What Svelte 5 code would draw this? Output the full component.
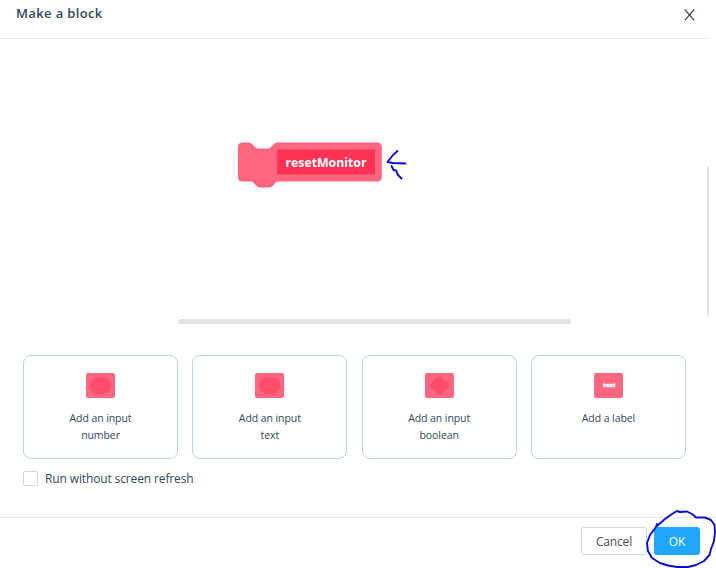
<script>
  const inputs = [
    { kind: 'round', lines: ['Add an input', 'number'] },
    { kind: 'round', lines: ['Add an input', 'text'] },
    { kind: 'boolean', lines: ['Add an input', 'boolean'] },
    { kind: 'label', lines: ['Add a label'] }
  ];
</script>

<div class="dialog">
  <header>
    <h1>Make a block</h1>
    <button class="close" aria-label="Close">
      <svg width="11" height="12" viewBox="0 0 11 12"><path d="M.8 .5 10.2 11.3M10.2 .5.8 11.3" /></svg>
    </button>
  </header>

  <main>
    <div class="workspace">
      <svg class="block" width="146" height="48" viewBox="236 141 146 48">
        <path
          d="M238.500 146.500q0-3.500 3.500-3.500h6.500c2 0 3 .8 4 2l2.500 2.500c1 1 2 1.500 3.500 1.500h9c1.500 0 2.500-.5 3.500-1.500l2.500-2.500c1-1.200 2-2 4-2H378q3.300 0 3.300 3.500v31q0 3.500-3.300 3.500H279c-2 0-3 .6-4 1.800l-2.500 2.600c-1 1-2 1.600-3.500 1.600h-9c-1.500 0-2.500-.6-3.500-1.600l-2.500-2.600c-1-1.200-2-1.800-4-1.800h-8q-3.500 0-3.500-3.500z"
          fill="#ff6680" stroke="#fa5271" stroke-width=".8"
        />
        <rect x="277" y="149.500" width="98" height="25" fill="#ff3355" />
        <text x="285.500" y="167" textLength="81" lengthAdjust="spacingAndGlyphs">resetMonitor</text>
      </svg>
      <div class="scroll-y"></div>
      <div class="scroll-x"></div>
    </div>

    <div class="cards">
      {#each inputs as input}
        <button class="card">
          <svg width="29" height="25" viewBox="0 0 29 25">
            <rect width="29" height="25" rx="2" fill="#ff6680" />
            {#if input.kind === 'round'}
              <rect x="3.800" y="4" width="21.500" height="17" rx="9.500" ry="8.500" fill="#ff4d6a" />
            {:else if input.kind === 'boolean'}
              <path d="M4 12.500 12 4.200Q14.500 3 17 4.200L25 12.500 17 20.800Q14.500 22 12 20.800Z" fill="#ff4d6a" />
            {:else}
              <text class="tiny" x="9" y="14" textLength="12.500" lengthAdjust="spacingAndGlyphs">text</text>
            {/if}
          </svg>
          <span class="caption">
            {#each input.lines as line}<span>{line}</span>{/each}
          </span>
        </button>
      {/each}
    </div>

    <div class="option">
      <span class="checkbox"></span>
      <span class="option-text">Run without screen refresh</span>
    </div>
  </main>

  <footer>
    <button class="cancel">Cancel</button>
    <button class="ok">OK</button>
  </footer>

  <svg class="ink" width="716" height="568" viewBox="0 0 716 568">
    <path d="M397.500 151 393 155 387.500 162 393 163 405.500 163.500M391.500 166 393.500 170 396 170.500 398 175 401.500 178.500" />
    <path d="M657 526 665 519 672 514 677 511 680 512 687 511.500 692 514 696 517.500 705 517.500 711 520 714.500 525 715 532 714 541 711 549 709.500 555 704 561 696 565 688 567 677 567 668 565.500 660 563 652 558 648 551 647 543 650 535 656 527 657 524" />
  </svg>
</div>

<style>
  :global(body) {
    background: #fff;
    overflow: hidden;
  }
  .dialog {
    position: relative;
    box-sizing: border-box;
    width: 716px;
    height: 568px;
    display: flex;
    flex-direction: column;
    font-family: 'Open Sans', 'Noto Sans', sans-serif;
    color: #34465c;
    overflow: hidden;
  }
  button {
    font: inherit;
    color: inherit;
    padding: 0;
    background: none;
    border: 0;
  }
  header {
    box-sizing: border-box;
    width: 709px;
    height: 39px;
    flex: none;
    border-bottom: 1px solid #e5e6e8;
    display: flex;
    justify-content: space-between;
    padding: 4px 14px 0 16px;
  }
  h1 {
    margin: 0;
    font-size: 13px;
    line-height: 18px;
    font-weight: 600;
    letter-spacing: 0.36px;
  }
  .close {
    height: 12px;
    margin-top: 5px;
    display: flex;
  }
  .close path {
    fill: none;
    stroke: #34465c;
    stroke-width: 1.2;
  }
  main {
    height: 478px;
    flex: none;
  }
  .workspace {
    height: 316px;
    width: 709px;
    display: grid;
    grid-template: 285px 31px / 1fr 2px;
  }
  .block {
    display: block;
    margin: 102px 0 0 236px;
  }
  .block text {
    font-size: 13px;
    font-weight: 700;
    fill: #fff;
  }
  .scroll-y {
    width: 2px;
    height: 150px;
    margin-top: 127px;
    background: #e3e3e3;
    border-radius: 1px;
  }
  .scroll-x {
    width: 393px;
    height: 5px;
    margin: -5px 0 0 178px;
    background: #e3e3e3;
    border-radius: 3px;
  }
  .cards {
    display: flex;
    gap: 14.3px;
    width: 663px;
    height: 104px;
    margin-left: 23px;
  }
  .card {
    flex: 1;
    box-sizing: border-box;
    border: 1px solid #b9d5ea;
    border-radius: 8px;
    padding-top: 17px;
    display: flex;
    flex-direction: column;
    align-items: center;
  }
  .card svg {
    flex: none;
  }
  .caption {
    margin-top: 12px;
    display: flex;
    flex-direction: column;
    align-items: center;
    font-size: 10.5px;
    line-height: 17px;
    letter-spacing: -0.08px;
  }
  .tiny {
    font-size: 5.5px;
    font-weight: 800;
    fill: #fff;
    stroke: #fff;
    stroke-width: 0.3;
  }
  .option {
    display: flex;
    align-items: center;
    height: 15px;
    margin: 12px 0 0 23px;
  }
  .checkbox {
    box-sizing: border-box;
    width: 15px;
    height: 15px;
    border: 1px solid #d4d7dc;
    border-radius: 2px;
  }
  .option-text {
    margin-left: 7px;
    font-size: 12px;
    line-height: 15px;
    letter-spacing: -0.13px;
  }
  footer {
    box-sizing: border-box;
    width: 716px;
    height: 51px;
    border-top: 1px solid #e5e6e8;
    display: flex;
    justify-content: flex-end;
    gap: 7px;
    padding: 9px 16px 0 0;
  }
  footer button {
    box-sizing: border-box;
    height: 28px;
    border-radius: 3px;
    font-size: 12px;
    line-height: 26px;
    padding-top: 1px;
  }
  .cancel {
    width: 66px;
    border: 1px solid #d5d7da;
    letter-spacing: -0.15px;
    color: #414b58;
  }
  .ok {
    width: 46px;
    background: #1ea7fd;
    color: #fff;
  }
  .ink {
    position: absolute;
    inset: 0;
    pointer-events: none;
  }
  .ink path {
    fill: none;
    stroke: #0c0ccc;
    stroke-width: 1.9;
    stroke-linecap: round;
    stroke-linejoin: round;
  }
</style>
